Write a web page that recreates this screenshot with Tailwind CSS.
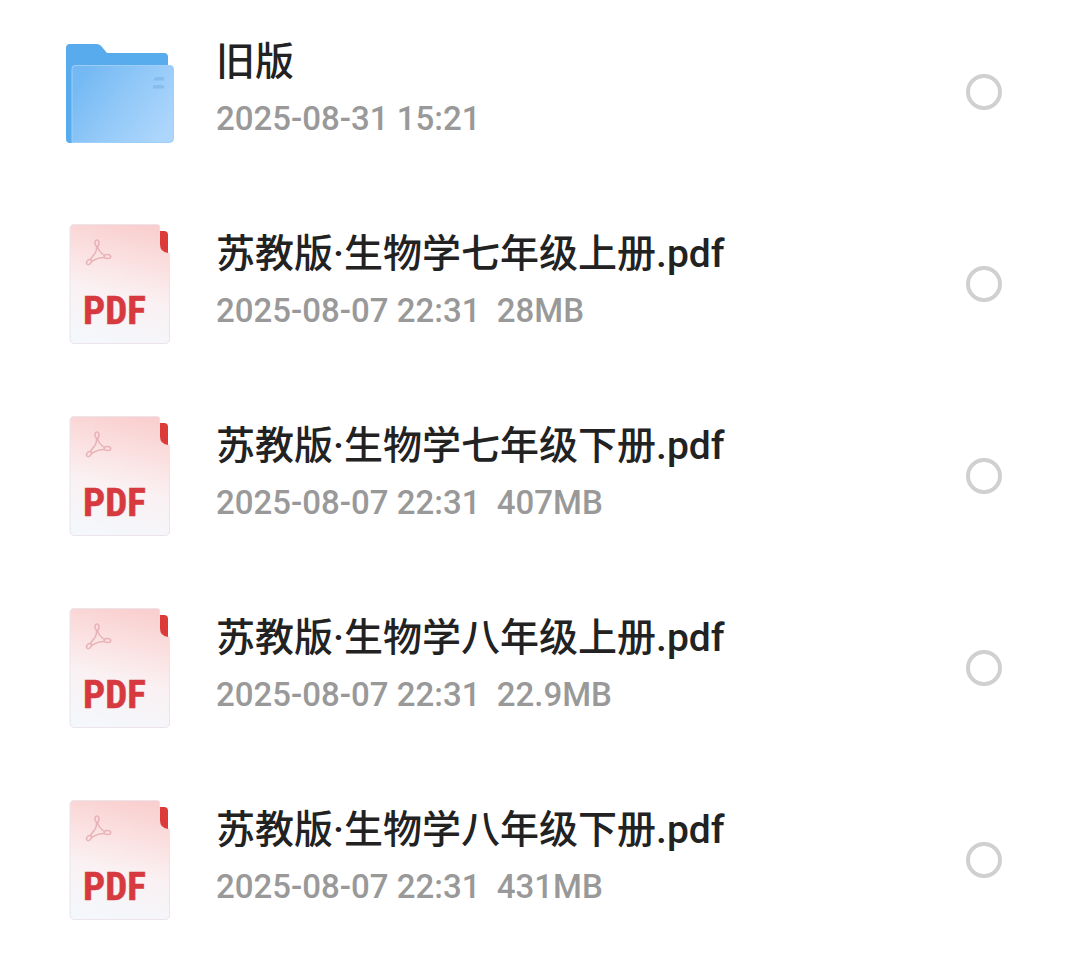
<!DOCTYPE html>
<html lang="zh-CN">
<head>
<meta charset="utf-8">
<meta name="viewport" content="width=device-width, initial-scale=1">
<title>文件列表</title>
<script src="https://cdn.jsdelivr.net/npm/@tailwindcss/browser@4"></script>
</head>
<body class="bg-white font-[Roboto,'Noto_Sans_CJK_SC',sans-serif] font-medium">
<svg class="absolute size-0" aria-hidden="true">
  <defs>
    <linearGradient id="page" x1="0.65" y1="0" x2="0.45" y2="1"><stop offset="0" stop-color="#f9cfcf"/><stop offset="0.3" stop-color="#fbe0e0"/><stop offset="0.6" stop-color="#faf1f3"/><stop offset="1" stop-color="#f4f7fb"/></linearGradient>
    <linearGradient id="back" x1="0" y1="0" x2="1" y2="1"><stop offset="0" stop-color="#58aaec"/><stop offset="1" stop-color="#55aeee"/></linearGradient>
    <linearGradient id="front" x1="0.05" y1="0.2" x2="1" y2="0.75"><stop offset="0" stop-color="#74b9f3"/><stop offset="0.5" stop-color="#93c9f8"/><stop offset="1" stop-color="#add6fc"/></linearGradient>
    <symbol id="pdf" viewBox="0 0 120 120">
      <path d="M14 .5H97q3 0 3 3V18q0 9 9.500 11V115q0 4.500-4.500 4.500H14.500Q10 119.500 10 115V5Q10 .5 14 .5Z" fill="url(#page)" stroke="#ece4e9" stroke-width="1"/>
      <path d="M100 7h4q4 0 4 4V29q-8-1-8-8.500Z" fill="#dd3a3a"/>
      <g fill="none" stroke="#e8b3b8" stroke-width="1.500" stroke-linejoin="round">
        <ellipse cx="37" cy="19" rx="2" ry="3"/>
        <ellipse cx="47.500" cy="32.500" rx="3.300" ry="2" transform="rotate(8 47.500 32.500)"/>
        <ellipse cx="29" cy="38" rx="2.800" ry="2" transform="rotate(-45 29 38)"/>
        <path d="M36.500 22q.3 4-1 6.500L30 36M37.500 22q.5 5 7 9.500M31 38q6-4.500 14-4.500"/>
      </g>
      <text x="23" y="100" font-size="39" font-weight="700" fill="#d63a3f" stroke="#d63a3f" stroke-width="0.500" class="font-['Liberation_Sans_Narrow','Roboto_Condensed',Roboto,sans-serif]">PDF</text>
    </symbol>
    <symbol id="folder" viewBox="0 0 120 120">
      <path d="M10 12H36q4 0 6 3l5 6H104q4 0 4 4v86H10q-4 0-4-4V16q0-4 4-4Z" fill="url(#back)"/>
      <path d="M15 33.500H110q3.500 0 3.500 3.500v69.500q0 4-4 4H12V36.500q0-3 3-3Z" fill="url(#front)" stroke="#9dcffa" stroke-width="1"/>
      <path d="M95 45h9v3.500H93ZM93 53h10l2 3.500H93Z" fill="#85bdee"/>
    </symbol>
  </defs>
</svg>
<main>
  <ul class="-mt-1">
    <li><label for="f1" class="flex h-48 items-center pl-15 pr-[78px]">
      <svg class="size-[120px] shrink-0" aria-hidden="true"><use href="#folder"/></svg>
      <span class="ml-9 min-w-0 flex-1 pb-1"><span class="block truncate text-[39px] leading-[58px] text-[#222]">旧版</span><span class="block whitespace-pre text-[33px] leading-[56px] text-[#999]">2025-08-31 15:21</span></span>
      <input id="f1" type="checkbox" class="size-9 shrink-0 appearance-none rounded-full border-4 border-[#d0d0d0] checked:bg-blue-500">
    </label></li>
    <li><label for="f2" class="flex h-48 items-center pl-15 pr-[78px]">
      <svg class="size-[120px] shrink-0" aria-hidden="true"><use href="#pdf"/></svg>
      <span class="ml-9 min-w-0 flex-1 pb-1"><span class="block truncate text-[39px] leading-[58px] text-[#222]">苏教版·生物学七年级上册.pdf</span><span class="block whitespace-pre text-[33px] leading-[56px] text-[#999]">2025-08-07 22:31  28MB</span></span>
      <input id="f2" type="checkbox" class="size-9 shrink-0 appearance-none rounded-full border-4 border-[#d0d0d0] checked:bg-blue-500">
    </label></li>
    <li><label for="f3" class="flex h-48 items-center pl-15 pr-[78px]">
      <svg class="size-[120px] shrink-0" aria-hidden="true"><use href="#pdf"/></svg>
      <span class="ml-9 min-w-0 flex-1 pb-1"><span class="block truncate text-[39px] leading-[58px] text-[#222]">苏教版·生物学七年级下册.pdf</span><span class="block whitespace-pre text-[33px] leading-[56px] text-[#999]">2025-08-07 22:31  407MB</span></span>
      <input id="f3" type="checkbox" class="size-9 shrink-0 appearance-none rounded-full border-4 border-[#d0d0d0] checked:bg-blue-500">
    </label></li>
    <li><label for="f4" class="flex h-48 items-center pl-15 pr-[78px]">
      <svg class="size-[120px] shrink-0" aria-hidden="true"><use href="#pdf"/></svg>
      <span class="ml-9 min-w-0 flex-1 pb-1"><span class="block truncate text-[39px] leading-[58px] text-[#222]">苏教版·生物学八年级上册.pdf</span><span class="block whitespace-pre text-[33px] leading-[56px] text-[#999]">2025-08-07 22:31  22.9MB</span></span>
      <input id="f4" type="checkbox" class="size-9 shrink-0 appearance-none rounded-full border-4 border-[#d0d0d0] checked:bg-blue-500">
    </label></li>
    <li><label for="f5" class="flex h-48 items-center pl-15 pr-[78px]">
      <svg class="size-[120px] shrink-0" aria-hidden="true"><use href="#pdf"/></svg>
      <span class="ml-9 min-w-0 flex-1 pb-1"><span class="block truncate text-[39px] leading-[58px] text-[#222]">苏教版·生物学八年级下册.pdf</span><span class="block whitespace-pre text-[33px] leading-[56px] text-[#999]">2025-08-07 22:31  431MB</span></span>
      <input id="f5" type="checkbox" class="size-9 shrink-0 appearance-none rounded-full border-4 border-[#d0d0d0] checked:bg-blue-500">
    </label></li>
  </ul>
</main>
</body>
</html>
